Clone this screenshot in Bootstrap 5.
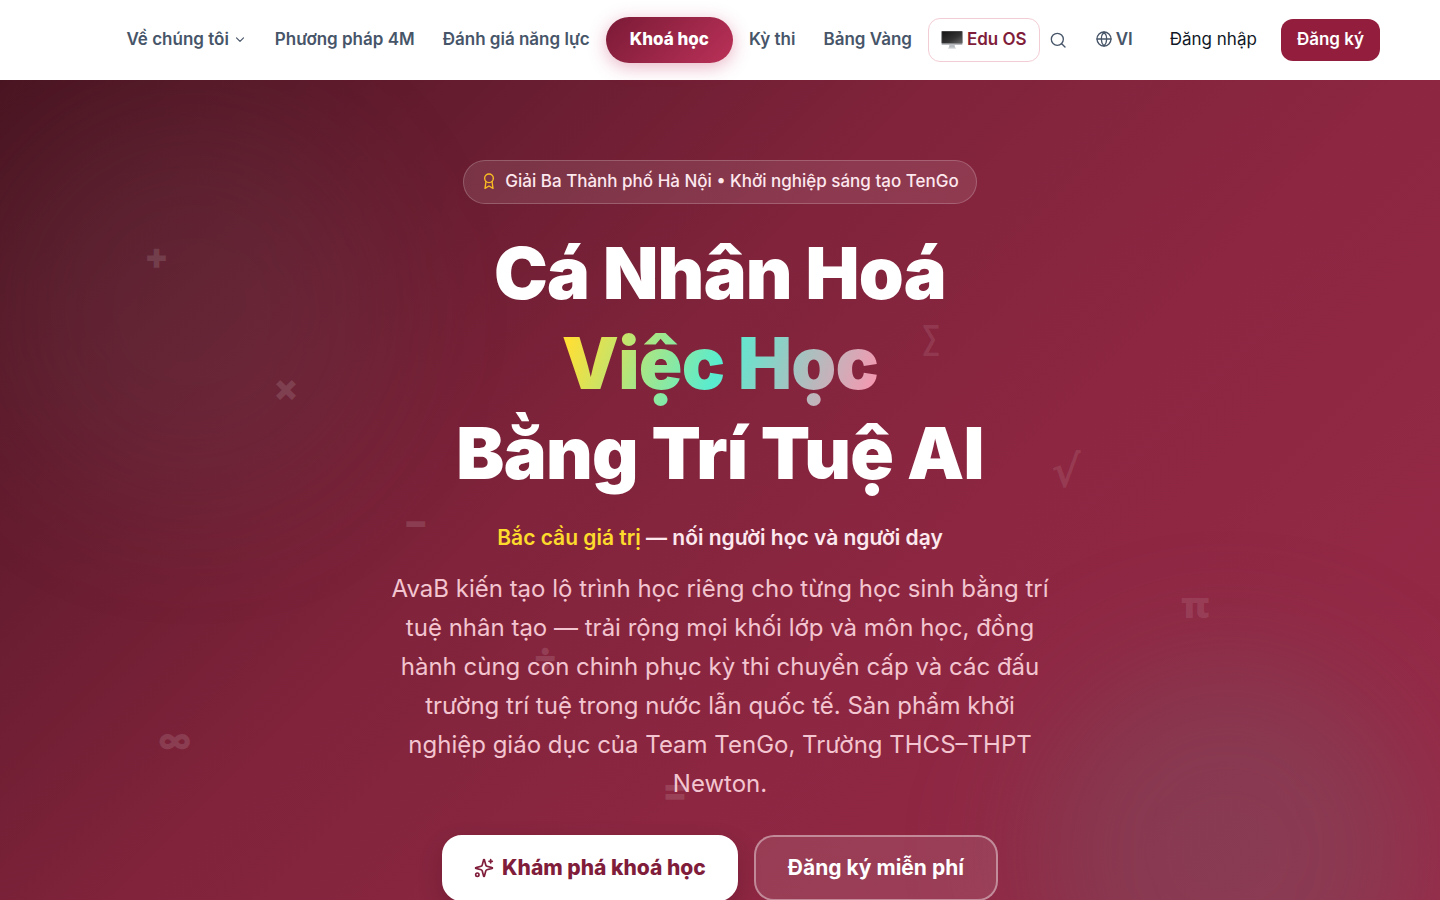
<!DOCTYPE html>
<html lang="vi">
<head>
<meta charset="utf-8">
<meta name="viewport" content="width=device-width, initial-scale=1">
<title>AvaB – Cá Nhân Hoá Việc Học</title>
<link href="https://cdn.jsdelivr.net/npm/bootstrap@5.3.0/dist/css/bootstrap.min.css" rel="stylesheet">
<style>
body{font-family:Inter,"Noto Sans",sans-serif;font-size:17px;line-height:26px;color:#111827}
.topbar{height:80px;z-index:5}
.bar-inner{padding:0 60px}
.topbar .nav-link,.lang-btn{padding:7px 12px 9px;font-weight:600;color:#475569;white-space:nowrap;font-size:17px;line-height:26px}
.topbar .nav-link:hover{color:#881337}
.topbar .pill-link{padding:9px 24px 11px;border-radius:23px;font-weight:800;color:#fff;background:linear-gradient(135deg,#7a1a36,#bb3158);box-shadow:0 4px 18px rgba(190,40,85,.35)}
.topbar .pill-link:hover{color:#fff}
.topbar .os-link{padding:7px 12px 9px;border:1px solid #f3cdd6;border-radius:12px;color:#7f1d3a;font-weight:600}
.icon-btn{padding:10px;color:#475569;border:0}
.icon-btn svg,.lang-btn svg{display:block}
.topbar .lang-btn{padding-right:13px;font-weight:600}
.login-btn{padding:7px 16px 9px;font-size:17px;line-height:26px;border:0;color:#111827}
.signup-btn{padding:7px 16px 9px;font-size:17px;line-height:26px;border:0;border-radius:12px;background:#931d3d;color:#fff;font-weight:600}
.signup-btn:hover{background:#7f1d3a;color:#fff}
.hero{padding:80px 0;background:linear-gradient(135deg,#4a1522 0%,#80233b 40%,#8c2641 60%,#982a48 100%)}
.glow{width:384px;height:384px;border-radius:50%;filter:blur(64px)}
.glow-a{left:0;top:40px;background:rgba(110,90,100,.14)}
.glow-b{right:20px;top:580px;background:rgba(105,115,125,.24)}
.award{padding:7px 17px 9px;border:1px solid rgba(255,255,255,.2);border-radius:22px;background:rgba(255,255,255,.1);color:#fde8ee;font-weight:500}
.award svg{color:#fbbf24}
.hero h1{font-size:72px;line-height:90px;font-weight:900;letter-spacing:-.01em;color:#fff}
.rainbow{background:linear-gradient(110deg,#ffdf35 4%,#58ecd0 50%,#f598b0 97%);-webkit-background-clip:text;background-clip:text;color:transparent}
.slogan{font-size:21px;line-height:31px;font-weight:600;color:#fde8ee}
.slogan strong{font-weight:600;color:#fddb2c}
.intro{max-width:664px;font-size:24px;line-height:39px;font-weight:400;color:#f3c5d0}
.cta{padding:16px 30px;border-radius:20px;font-size:21px;line-height:30px;font-weight:800;border:2px solid #fff}
.cta-main,.cta-main:hover{background:#fff;color:#7f1d3a;box-shadow:0 10px 24px rgba(40,0,15,.2)}
.cta-ghost,.cta-ghost:hover{padding:16px 32px;background:rgba(255,255,255,.1);border-color:rgba(255,255,255,.4);color:#fff;font-weight:700}
.sym{font-weight:900;font-size:36px;line-height:40px;color:rgba(255,255,255,.12)}
.sym-sum{font-family:"DejaVu Sans Mono",monospace;font-size:32px}
.sym-root{font-family:"DejaVu Sans",sans-serif;font-size:44px;font-weight:700}
.sym-pi{font-family:"Noto Sans",sans-serif}
.sym-inf{font-size:32px}
.sym-sum,.sym-root,.sym-pi{color:rgba(255,255,255,.1)}
</style>
</head>
<body>
<header class="topbar bg-white position-relative d-flex align-items-center">
  <div class="container-fluid bar-inner d-flex align-items-center justify-content-end">
    <nav class="nav flex-nowrap align-items-center gap-1">
      <a class="nav-link d-flex align-items-center gap-1" href="#">Về chúng tôi
        <svg width="14" height="14" viewBox="0 0 24 24" fill="none" stroke="currentColor" stroke-width="2" stroke-linecap="round" stroke-linejoin="round"><path d="m6 10 6 6 6-6"/></svg></a>
      <a class="nav-link" href="#">Phương pháp 4M</a>
      <a class="nav-link" href="#">Đánh giá năng lực</a>
      <a class="nav-link pill-link" href="#">Khoá học</a>
      <a class="nav-link" href="#">Kỳ thi</a>
      <a class="nav-link" href="#">Bảng Vàng</a>
      <a class="nav-link os-link d-flex align-items-center gap-1" href="#">
        <svg width="22" height="20" viewBox="0 0 22 20"><defs><linearGradient id="scr" x1="0" y1="0" x2="1" y2="1"><stop offset="0" stop-color="#151515"/><stop offset=".6" stop-color="#333"/><stop offset="1" stop-color="#666"/></linearGradient></defs><path d="M8.500 15h5l.6 4h-6.200z" fill="#b9bdc1"/><rect x="7" y="18.500" width="8" height="1.200" rx=".6" fill="#d5d8da"/><rect x=".5" y="2" width="21" height="14" rx=".8" fill="#b8bcc0"/><rect x=".5" y="2" width="21" height="12.500" rx=".8" fill="#555"/><rect x="1.200" y="2.700" width="19.600" height="11.300" fill="url(#scr)"/></svg>
        Edu OS</a>
    </nav>
    <button class="btn icon-btn" type="button" aria-label="Tìm kiếm"><svg width="16" height="16" viewBox="0 0 24 24" fill="none" stroke="currentColor" stroke-width="2" stroke-linecap="round" stroke-linejoin="round"><circle cx="11" cy="11" r="9"/><path d="m22.500 22.500-5-5"/></svg></button>
    <button class="btn lang-btn border-0 d-flex align-items-center gap-1 ms-2" type="button"><svg width="16" height="16" viewBox="0 0 24 24" fill="none" stroke="currentColor" stroke-width="2" stroke-linecap="round" stroke-linejoin="round"><circle cx="12" cy="12" r="10.500"/><path d="M12 1.500a15.500 15.500 0 0 0 0 21 15.500 15.500 0 0 0 0-21M1.500 12h21"/></svg>VI</button>
    <button class="btn login-btn ms-2" type="button">Đăng nhập</button>
    <button class="btn signup-btn ms-2" type="button">Đăng ký</button>
  </div>
</header>
<main class="hero position-relative overflow-hidden">
  <div class="glow glow-a position-absolute"></div>
  <div class="glow glow-b position-absolute"></div>
  <div aria-hidden="true">
    <span class="sym position-absolute" style="left:10%;top:156px">+</span>
    <span class="sym position-absolute" style="left:19%;top:288px">×</span>
    <span class="sym position-absolute" style="left:28%;top:422px">−</span>
    <span class="sym position-absolute" style="left:37%;top:557px">÷</span>
    <span class="sym position-absolute" style="left:46%;top:690px">=</span>
    <span class="sym sym-sum position-absolute" style="left:64%;top:238px">∑</span>
    <span class="sym sym-root position-absolute" style="left:73%;top:372px">√</span>
    <span class="sym sym-pi position-absolute" style="left:82%;top:505px">π</span>
    <span class="sym sym-inf position-absolute" style="left:11%;top:641px">∞</span>
  </div>
  <div class="container position-relative text-center d-flex flex-column align-items-center">
    <div class="award d-inline-flex align-items-center gap-2">
      <svg width="16" height="16" viewBox="0 0 24 24" fill="none" stroke="currentColor" stroke-width="2" stroke-linecap="round" stroke-linejoin="round"><circle cx="12" cy="8" r="6.500"/><path d="M7.500 12.500 6 23l6-3.500 6 3.500-1.500-10.500"/></svg>
      <span>Giải Ba Thành phố Hà Nội • Khởi nghiệp sáng tạo TenGo</span>
    </div>
    <h1 class="mt-4 mb-4">Cá Nhân Hoá<br><span class="rainbow">Việc Học</span><br>Bằng Trí Tuệ AI</h1>
    <p class="slogan mb-3"><strong>Bắc cầu giá trị</strong> — nối người học và người dạy</p>
    <p class="intro mb-0">AvaB kiến tạo lộ trình học riêng cho từng học sinh bằng trí tuệ nhân tạo — trải rộng mọi khối lớp và môn học, đồng hành cùng con chinh phục kỳ thi chuyển cấp và các đấu trường trí tuệ trong nước lẫn quốc tế. Sản phẩm khởi nghiệp giáo dục của Team TenGo, Trường THCS–THPT Newton.</p>
    <div class="d-flex gap-3 mt-4 pt-2">
      <a class="btn cta cta-main d-flex align-items-center gap-2" href="#"><svg width="20" height="20" viewBox="0 0 24 24" fill="none" stroke="currentColor" stroke-width="2" stroke-linecap="round" stroke-linejoin="round"><path d="M9.900 15.500A2 2 0 0 0 8.500 14.100l-6.100-1.600a.5.5 0 0 1 0-1L8.500 9.900A2 2 0 0 0 9.900 8.500l1.600-6.100a.5.5 0 0 1 1 0l1.600 6.100a2 2 0 0 0 1.400 1.400l6.100 1.600a.5.5 0 0 1 0 1l-6.100 1.600a2 2 0 0 0-1.400 1.400l-1.600 6.100a.5.5 0 0 1-1 0z"/><path d="M20 2v4M22 4h-4"/><circle cx="4" cy="20" r="2"/></svg>Khám phá khoá học</a>
      <a class="btn cta cta-ghost" href="#">Đăng ký miễn phí</a>
    </div>
  </div>
</main>
<script src="https://cdn.jsdelivr.net/npm/bootstrap@5.3.0/dist/js/bootstrap.bundle.min.js"></script>
</body>
</html>
